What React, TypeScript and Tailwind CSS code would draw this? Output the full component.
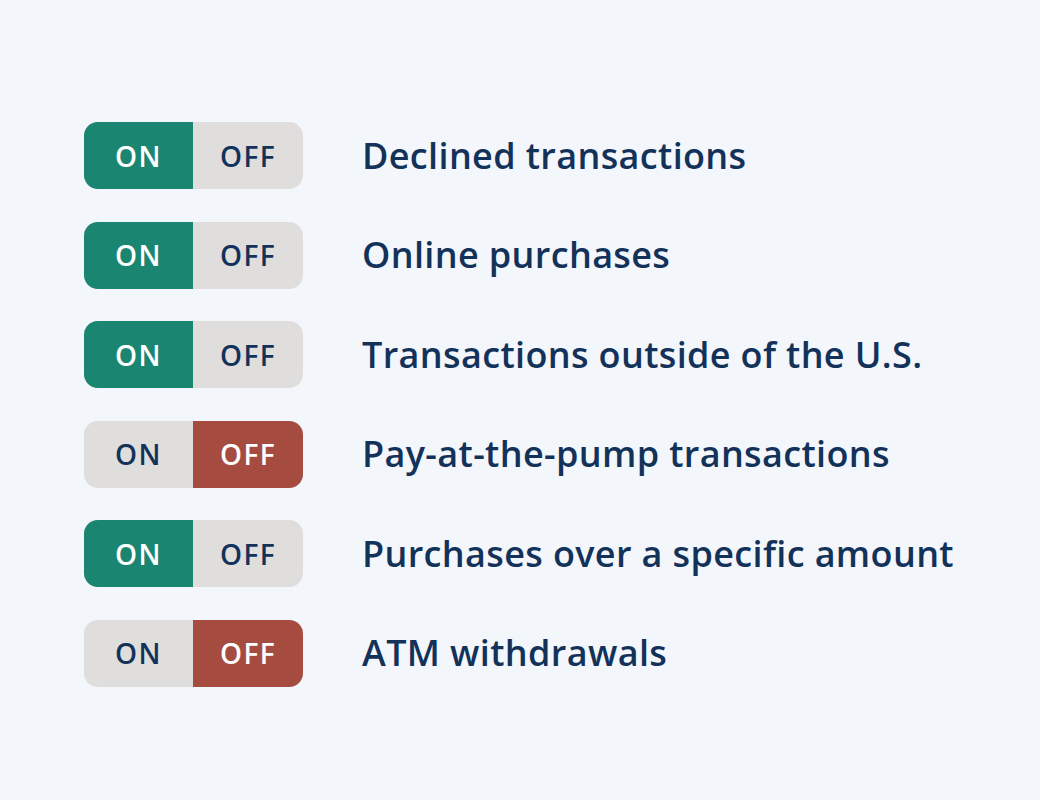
import React from "react";

const rows = [
  { label: "Declined transactions", on: true },
  { label: "Online purchases", on: true },
  { label: "Transactions outside of the U.S.", on: true },
  { label: "Pay-at-the-pump transactions", on: false },
  { label: "Purchases over a specific amount", on: true },
  { label: "ATM withdrawals", on: false },
];

const Toggle = ({ on }: { on: boolean }) => {
  return (
    <div className="flex h-[67px] w-[219px] overflow-hidden rounded-[14px] bg-[#dfdedd] text-[28px] font-semibold tracking-[0.05em]">
      <div
        className={
          on
            ? "flex w-[109px] items-center justify-center bg-[#1a8672] text-white"
            : "flex w-[109px] items-center justify-center text-[#13325a]"
        }
      >
        ON
      </div>
      <div
        className={
          on
            ? "flex flex-1 items-center justify-center text-[#13325a]"
            : "flex flex-1 items-center justify-center bg-[#a64b40] text-white"
        }
      >
        OFF
      </div>
    </div>
  );
};

export default function App() {
  return (
    <div
      className="min-h-[800px] w-full bg-[#f3f6fb] pl-[84px] pt-[122px]"
      style={{ fontFamily: "'Open Sans', Lato, sans-serif" }}
    >
      <div className="flex flex-col gap-[32.6px]">
        {rows.map((row, index) => (
          <div key={index} className="flex items-center gap-[59px]">
            <Toggle on={row.on} />
            <span className="text-[36px] font-semibold tracking-[0.01em] text-[#13325a]">
              {row.label}
            </span>
          </div>
        ))}
      </div>
    </div>
  );
}
